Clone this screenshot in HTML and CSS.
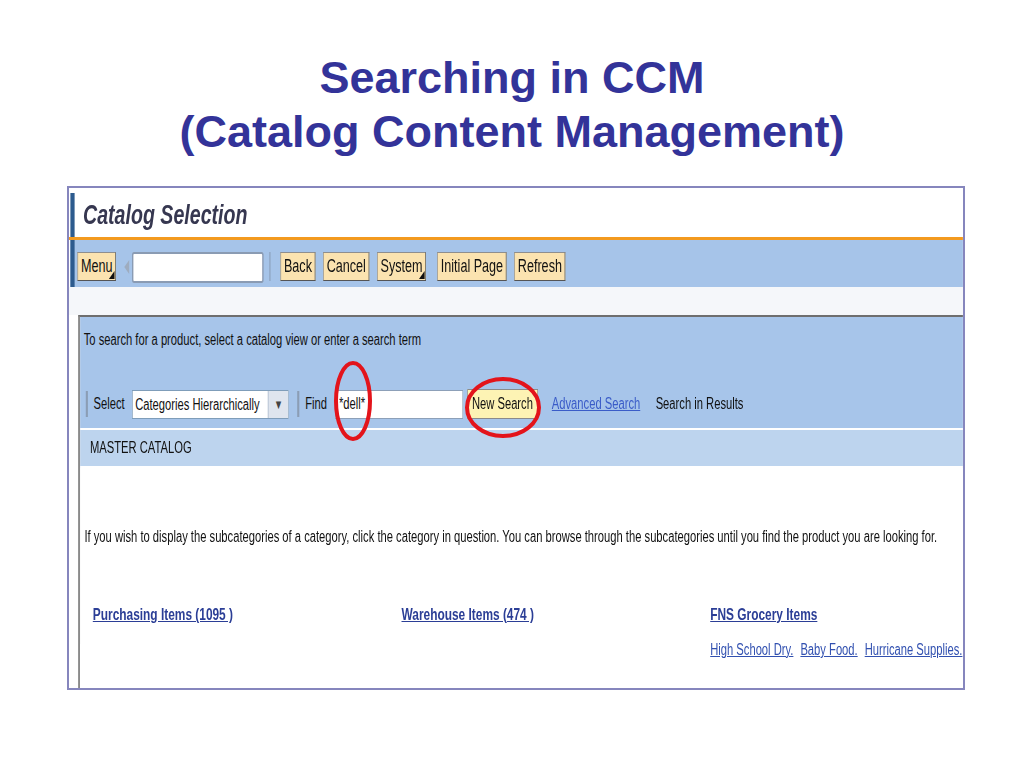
FILE: index.html
```html
<!DOCTYPE html>
<html lang="en">

<head>
    <meta charset="UTF-8">
    <meta name="viewport" content="width=device-width, initial-scale=1.0">
    <title>Searching in CCM</title>
    <link rel="stylesheet" href="styles.css">
</head>

<body>

    <!-- Slide title -->
    <h1 class="slide-title">Searching in CCM<br>(Catalog Content Management)</h1>

    <!-- Screenshot of the catalog screen -->
    <div class="shot">
        <div class="shot-squeeze">
            <div class="sap-title">Catalog Selection</div>
            <div class="sap-rule"></div>
            <div class="sap-toolbar">
                <button class="sap-btn has-menu">Menu</button>
                <span class="tb-arrow"></span>
                <input class="tb-field" type="text">
                <span class="tb-sep"></span>
                <button class="sap-btn">Back</button>
                <button class="sap-btn">Cancel</button>
                <button class="sap-btn has-menu wide-gap">System</button>
                <button class="sap-btn">Initial Page</button>
                <button class="sap-btn">Refresh</button>
            </div>
            <div class="sap-gap"></div>

            <div class="panel">
                <div class="panel-search">
                    <p class="hint">To search for a product, select a catalog view or enter a search term</p>
                    <div class="search-row">
                        <span class="field-sep"></span>
                        <label class="field-label">Select</label>
                        <div class="dropdown">
                            <span class="dd-text">Categories Hierarchically</span>
                            <span class="dd-btn">&#9660;</span>
                        </div>
                        <span class="field-sep sep-gap"></span>
                        <label class="field-label" for="find">Find</label>
                        <input class="find-input" id="find" type="text" value="*dell*">
                        <button class="new-search">New Search</button>
                        <a class="adv-link" href="#">Advanced Search</a>
                        <span>Search in Results</span>
                    </div>
                </div>

                <div class="panel-head">MASTER CATALOG</div>

                <div class="panel-body">
                    <p class="intro">If you wish to display the subcategories of a category, click the category in question. You can browse through the subcategories until you find the product you are looking for.</p>
                    <div class="cat-grid">
                        <div>
                            <a class="cat-link" href="#">Purchasing Items&nbsp;(1095 )</a>
                        </div>
                        <div>
                            <a class="cat-link" href="#">Warehouse Items&nbsp;(474 )</a>
                        </div>
                        <div>
                            <a class="cat-link" href="#">FNS Grocery Items</a>
                            <div class="sub-links">
                                <a href="#">High School Dry.</a>
                                <a href="#">Baby Food.</a>
                                <a href="#">Hurricane Supplies.</a>
                            </div>
                        </div>
                    </div>
                </div>
            </div>
        </div>

        <!-- red hand drawn marks -->
        <svg class="mark mark-find" viewBox="0 0 40 82">
            <ellipse cx="20" cy="41" rx="17" ry="38" fill="none" stroke="#e3141b" stroke-width="4" />
        </svg>
        <svg class="mark mark-btn" viewBox="0 0 78 63">
            <ellipse cx="39" cy="31.5" rx="36" ry="28.5" fill="none" stroke="#e3141b" stroke-width="4" />
        </svg>
    </div>

</body>

</html>
```

FILE: styles.css
```css
/* General Styles */
body {
    margin: 0;
    background: #ffffff;
    font-family: "Liberation Sans", Arial, sans-serif;
}

.slide-title {
    margin: 51px 0 0;
    font-family: "Liberation Sans", Arial, Helvetica, sans-serif;
    font-size: 45px;
    line-height: 54px;
    font-weight: bold;
    color: #333399;
    text-align: center;
}

/* Screenshot frame */
.shot {
    position: relative;
    box-sizing: border-box;
    width: 898px;
    height: 504px;
    margin: 27px 0 0 67px;
    border: 2px solid #8686bd;
    overflow: hidden;
}

/* the captured screen is squeezed sideways */
.shot-squeeze {
    width: 1277px;
    height: 100%;
    display: flex;
    flex-direction: column;
    transform: scaleX(0.7);
    transform-origin: 0 0;
    font-size: 16px;
    color: #111;
}

.sap-title {
    height: 44px;
    margin: 5px 0 0 2px;
    padding-left: 12px;
    border-left: 6px solid #2d5b8e;
    font-size: 28px;
    line-height: 44px;
    font-weight: bold;
    font-style: italic;
    color: #363750;
}

.sap-rule {
    height: 3px;
    background: #f39a1f;
}

.sap-toolbar {
    box-sizing: border-box;
    height: 47px;
    margin-left: 2px;
    padding: 12px 0 0 4px;
    border-left: 6px solid #2d5b8e;
    background: #a6c4e9;
    display: flex;
    align-items: flex-start;
}

.sap-btn {
    position: relative;
    height: 29px;
    margin-right: 11px;
    padding: 0 4px;
    font-family: "Liberation Sans", Arial, sans-serif;
    font-size: 18px;
    color: #111;
    background: #fbe3b0;
    border: 1px solid #8e8e8e;
    border-right-color: #555;
    border-bottom-color: #555;
}

.sap-btn.has-menu::after {
    content: "";
    position: absolute;
    right: 1px;
    bottom: 1px;
    border-left: 8px solid transparent;
    border-bottom: 8px solid #111;
}

.sap-btn.wide-gap {
    margin-right: 16px;
}

.tb-arrow {
    width: 0;
    height: 0;
    margin: 8px 4px 0 1px;
    border-right: 7px solid #9eacbf;
    border-top: 7px solid transparent;
    border-bottom: 7px solid transparent;
}

.tb-field {
    box-sizing: border-box;
    width: 188px;
    height: 31px;
    border: 2px solid #8a9bb3;
    border-radius: 3px;
    background: #fff;
}

.tb-sep {
    width: 2px;
    height: 29px;
    margin: 0 14px 0 8px;
    background: #8fa6c4;
}

.sap-gap {
    height: 28px;
    background: #f5f7fa;
}

/* Catalog panel */
.panel {
    flex: 1;
    margin-left: 13px;
    border-left: 3px solid #8a8a8a;
    border-top: 2px solid #6e6e6e;
    display: flex;
    flex-direction: column;
}

.panel-search {
    padding: 13px 0 9px 5px;
    background: #a7c5ea;
}

.hint {
    margin: 0;
    line-height: 20px;
}

.search-row {
    height: 30px;
    margin-top: 39px;
    padding-left: 3px;
    display: flex;
    align-items: center;
}

.field-sep {
    width: 3px;
    height: 26px;
    margin-right: 8px;
    background: #8b9db5;
}

.field-sep.sep-gap {
    margin-left: 12px;
}

.field-label {
    margin-right: 11px;
}

.dropdown {
    box-sizing: border-box;
    width: 224px;
    height: 29px;
    display: flex;
    border: 1px solid #7f9db9;
    background: #fff;
}

.dd-text {
    flex: 1;
    padding-left: 3px;
    line-height: 27px;
    white-space: nowrap;
    overflow: hidden;
}

.dd-btn {
    width: 28px;
    border-left: 1px solid #a9b8ca;
    background: #dfe5ee;
    font-size: 13px;
    line-height: 27px;
    text-align: center;
    color: #444;
}

.find-input {
    box-sizing: border-box;
    width: 183px;
    height: 29px;
    margin-right: 6px;
    padding-left: 5px;
    border: 1px solid #8da0b8;
    font-family: "Liberation Sans", Arial, sans-serif;
    font-size: 16px;
    color: #111;
}

.new-search {
    height: 30px;
    margin-right: 20px;
    padding: 0 6px;
    font-family: "Liberation Sans", Arial, sans-serif;
    font-size: 16px;
    color: #111;
    background: #fdf3b4;
    border: 1px solid #8a8a8a;
}

.adv-link {
    margin-right: 22px;
    color: #3a5cc8;
}

.panel-head {
    height: 36px;
    padding-left: 14px;
    border-top: 2px solid #fff;
    border-bottom: 2px solid #fff;
    background: #bdd4ee;
    line-height: 36px;
}

.panel-body {
    flex: 1;
    padding: 59px 0 0 6px;
    background: #fff;
}

.intro {
    margin: 0;
    line-height: 20px;
    white-space: nowrap;
}

.cat-grid {
    margin: 58px 0 0 12px;
    display: grid;
    grid-template-columns: repeat(3, 441px);
}

.cat-link {
    display: inline-block;
    font-size: 17px;
    line-height: 20px;
    font-weight: bold;
    color: #2b3e96;
}

.sub-links {
    margin-top: 15px;
    display: flex;
    gap: 10px;
    line-height: 20px;
    white-space: nowrap;
}

.sub-links a {
    color: #3150b0;
}

/* red marks drawn over the screenshot */
.mark {
    position: absolute;
    overflow: visible;
}

.mark-find {
    left: 264px;
    top: 172px;
    width: 40px;
    height: 82px;
}

.mark-btn {
    left: 395px;
    top: 188px;
    width: 78px;
    height: 63px;
}
```
